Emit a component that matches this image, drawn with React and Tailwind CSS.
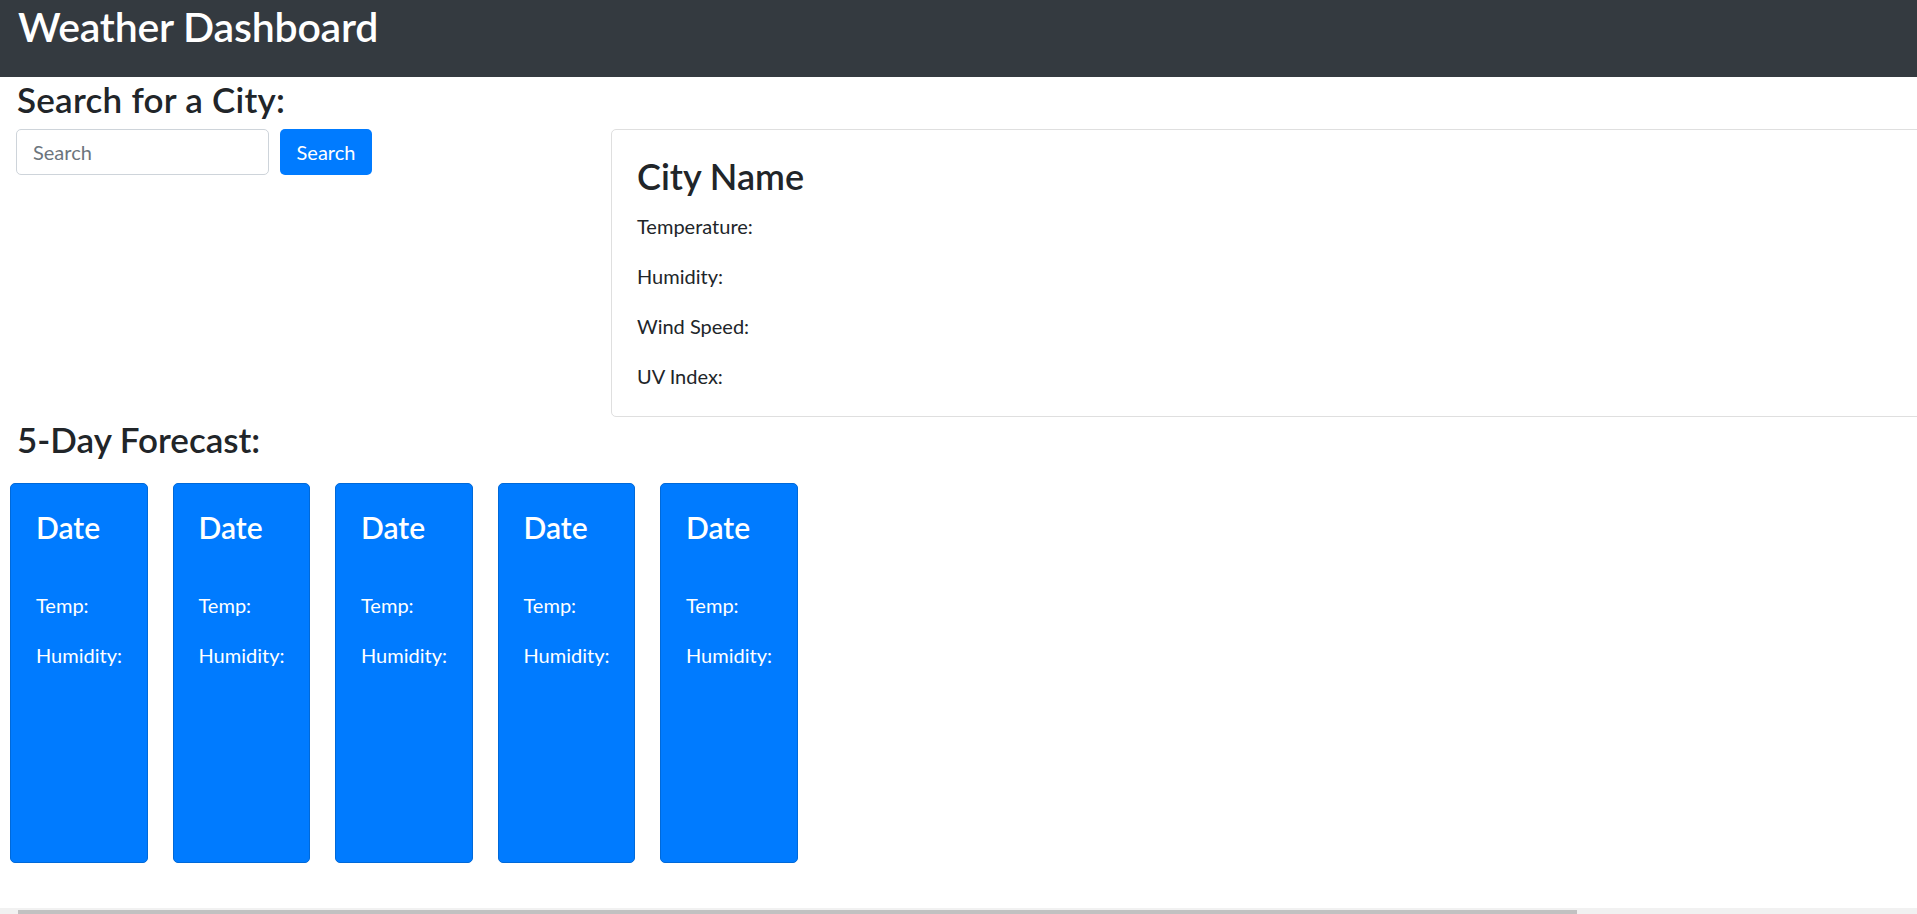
import React from 'react';

const days = ['Date', 'Date', 'Date', 'Date', 'Date'];
const cityFields = ['Temperature:', 'Humidity:', 'Wind Speed:', 'UV Index:'];

export default function App() {
  return (
    <div className="relative h-[914px] w-[1917px] overflow-hidden bg-white text-[#212529] font-['Lato','Open_Sans',sans-serif]">
      {/* Header */}
      <header className="h-[77px] bg-[#343a40] px-[18px] pt-[2px]">
        <h1 className="text-[41px] leading-[1.2] font-semibold tracking-[-0.2px] text-white">Weather Dashboard</h1>
      </header>

      {/* Search + current weather */}
      <section className="w-[2300px]">
        <h3 className="mt-[1px] pl-[17px] text-[35px] leading-[1.2] font-semibold tracking-[0.25px]">Search for a City:</h3>
        <div className="mt-[9px] flex">
          <div className="flex w-[611px] items-start gap-[11px] pl-[16px]">
            <input
              type="text"
              placeholder="Search"
              className="h-[46px] w-[253px] rounded-[5px] border border-[#ced4da] px-[16px] text-[20px] outline-none placeholder:text-[#6c757d]"
            />
            <button className="h-[46px] w-[92px] rounded-[5px] bg-[#007bff] text-[20px] text-white">Search</button>
          </div>
          <div className="h-[288px] flex-1 rounded-[5px] border border-[#dfdfdf] px-[25px] pt-[25px]">
            <h2 className="text-[36px] leading-[1.2] font-semibold">City Name</h2>
            <div className="mt-[16px] flex flex-col gap-[26px]">
              {cityFields.map((f) => (
                <p key={f} className="text-[20px] leading-[1.2]">{f}</p>
              ))}
            </div>
          </div>
        </div>
      </section>

      {/* Forecast */}
      <section>
        <h3 className="mt-[1px] pl-[17px] text-[35px] leading-[1.2] font-semibold">5-Day Forecast:</h3>
        <div className="mt-[23px] flex gap-[25px] pl-[10px]">
          {days.map((d, i) => (
            <div key={i} className="h-[380px] w-[137.5px] rounded-[5px] border border-[#0069d9] bg-[#007bff] px-[25px] pt-[25px] text-white">
              <h4 className="text-[30px] leading-[1.2] font-semibold">{d}</h4>
              <p className="mt-[48px] text-[20px] leading-[1.2]">Temp:</p>
              <p className="mt-[26px] text-[20px] leading-[1.2]">Humidity:</p>
            </div>
          ))}
        </div>
      </section>

      {/* Horizontal scrollbar */}
      <div className="absolute bottom-0 left-0 h-[6px] w-full bg-[#f1f1f1]">
        <div className="ml-[18px] mt-[2px] h-[4px] w-[1559px] bg-[#c1c1c1]" />
      </div>
    </div>
  );
}
